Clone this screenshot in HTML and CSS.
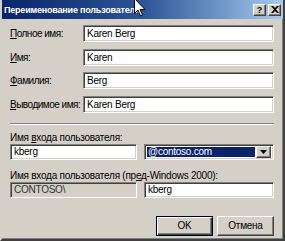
FILE: index.html
```html
<!DOCTYPE html>
<html lang="ru">
  <head>
    <meta charset="UTF-8" />
    <title>Переименование пользователя</title>
    <link rel="stylesheet" href="styles.css">
  </head>
  <body>
    <div class="window">
      <div class="window__title">
        <span class="window__caption">Переименование пользователя</span>
        <div class="window__controls">
          <span class="caption__btn caption__btn--help">?</span>
          <span class="caption__btn">
            <svg width="8" height="7" viewBox="0 0 8 7">
              <path d="M0 0h2l2 2 2-2h2L5 3.5 8 7H6L4 5 2 7H0l3-3.5z" fill="#000" />
            </svg>
          </span>
        </div>
      </div>

      <div class="window__body">
        <div class="form__grid">
          <label><u>П</u>олное имя:</label>
          <div class="field">Karen Berg</div>
          <label><u>И</u>мя:</label>
          <div class="field">Karen</div>
          <label><u>Ф</u>амилия:</label>
          <div class="field">Berg</div>
          <label><u>В</u>ыводимое имя:</label>
          <div class="field">Karen Berg</div>
        </div>

        <div class="separator"></div>

        <div class="form__label">Имя <u>в</u>хода пользователя:</div>
        <div class="form__row">
          <div class="field field--small field--left">kberg</div>
          <div class="field field--small combo">
            <span class="combo__value">@contoso.com</span>
            <span class="combo__btn">
              <svg width="7" height="4" viewBox="0 0 7 4"><path d="M0 0h7L3.5 4z" fill="#000" /></svg>
            </span>
          </div>
        </div>

        <div class="form__label form__label--second">Имя входа пользователя (пр<u>е</u>д-Windows 2000):</div>
        <div class="form__row">
          <div class="field field--small field--left field--disabled">CONTOSO\</div>
          <div class="field field--small field--right">kberg</div>
        </div>

        <div class="form__actions">
          <button class="btn btn--default">OK</button>
          <button class="btn">Отмена</button>
        </div>
      </div>

      <svg class="cursor" width="12" height="19" viewBox="0 0 12 19">
        <path d="M0.5 0.5v15l3.5-3.5 2.5 6 2-1-2.5-5.5h5z" fill="#fff" stroke="#000" stroke-width="1" />
      </svg>
    </div>
  </body>
</html>
```

FILE: styles.css
```css
* {
  margin: 0;
  padding: 0;
  box-sizing: border-box;
}
html {
  font-family: "Liberation Sans", Arial, sans-serif;
  font-size: 10px;
  letter-spacing: -0.25px;
}
body {
  background-color: #ffffff;
}
.window {
  position: relative;
  width: 285px;
  height: 241px;
  display: flex;
  flex-direction: column;
  background-color: #d4d0c8;
  border: 2px solid #d4d0c8;
  border-top: none;
  border-right-color: #404040;
  border-bottom-color: #404040;
  box-shadow: inset -1px -1px 0 #808080;
  overflow: hidden;
}

.window__title {
  display: flex;
  align-items: center;
  justify-content: space-between;
  height: 19px;
  padding: 0 2px 0 2px;
  background: linear-gradient(to right, #0a246a 0%, #2c5594 50%, #a6caf0 100%);
}
.window__caption {
  color: #ffffff;
  font-weight: bold;
  font-size: 9px;
  letter-spacing: -0.2px;
  white-space: nowrap;
}
.window__controls {
  display: flex;
  gap: 2px;
}
.caption__btn {
  display: flex;
  align-items: center;
  justify-content: center;
  width: 13px;
  height: 12px;
  background-color: #d4d0c8;
  border: 1px solid;
  border-color: #ffffff #404040 #404040 #ffffff;
  box-shadow: inset -1px -1px 0 #808080;
  font-weight: bold;
  font-size: 9px;
  letter-spacing: 0;
  color: #000;
}

.window__body {
  display: flex;
  flex-direction: column;
  padding: 6px 9px 0 8px;
}
.form__grid {
  display: grid;
  grid-template-columns: 73px 1fr;
  row-gap: 6.5px;
  align-items: center;
}
.form__grid label {
  color: #000;
  letter-spacing: -0.5px;
  white-space: nowrap;
}

.field {
  height: 17px;
  display: flex;
  align-items: center;
  padding: 0 3px;
  background-color: #ffffff;
  border: 1px solid;
  border-color: #808080 #ffffff #ffffff #808080;
  box-shadow: inset 1px 1px 0 #404040, inset -1px -1px 0 #d4d0c8;
  color: #000;
  white-space: nowrap;
  overflow: hidden;
}
.field--small {
  height: 16px;
}
.field--left {
  width: 127px;
}
.field--right {
  width: 130px;
}
.field--disabled {
  background-color: #d4d0c8;
  color: #303030;
}

.separator {
  margin-top: 10px;
  height: 2px;
  border-top: 1px solid #808080;
  border-bottom: 1px solid #ffffff;
}

.form__label {
  margin-top: 6px;
  line-height: 13px;
  white-space: nowrap;
  color: #000;
}
.form__label--second {
  margin-top: 9px;
}
.form__row {
  display: flex;
  gap: 7px;
}

.combo {
  width: 130px;
  padding: 2px;
  gap: 1px;
}
.combo__value {
  flex: 1;
  height: 100%;
  display: flex;
  align-items: center;
  padding-left: 1px;
  background-color: #0a246a;
  color: #ffffff;
}
.combo__btn {
  width: 15px;
  height: 12px;
  display: flex;
  align-items: center;
  justify-content: center;
  background-color: #d4d0c8;
  border: 1px solid;
  border-color: #ffffff #404040 #404040 #ffffff;
  box-shadow: inset -1px -1px 0 #808080;
}

.form__actions {
  display: flex;
  justify-content: flex-end;
  gap: 4px;
  margin-top: 18px;
}
.btn {
  width: 57px;
  height: 20px;
  font-family: inherit;
  font-size: 10px;
  letter-spacing: -0.25px;
  color: #000;
  background-color: #d4d0c8;
  border: 1px solid;
  border-color: #ffffff #404040 #404040 #ffffff;
  box-shadow: inset -1px -1px 0 #808080;
}
.btn--default {
  border: 1px solid #000;
  box-shadow: inset 1px 1px 0 #ffffff, inset -1px -1px 0 #404040, inset -2px -2px 0 #808080;
}

.cursor {
  position: absolute;
  left: 132px;
  top: -2px;
}
```
